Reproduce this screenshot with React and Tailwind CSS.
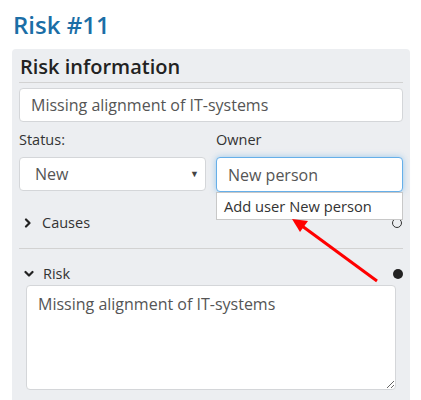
import React from "react";

const F = { fontFamily: '"Open Sans", "Liberation Sans", sans-serif' };

function ChevronRight() {
  return (
    <svg width="8" height="10" viewBox="0 0 8 10" className="shrink-0">
      <path d="M2 1.5 L5.5 5 L2 8.5" fill="none" stroke="#222" strokeWidth="2.2" strokeLinecap="round" strokeLinejoin="round" />
    </svg>
  );
}
function ChevronDown() {
  return (
    <svg width="10" height="8" viewBox="0 0 10 8" className="shrink-0">
      <path d="M1.5 2 L5 5.5 L8.5 2" fill="none" stroke="#222" strokeWidth="2.2" strokeLinecap="round" strokeLinejoin="round" />
    </svg>
  );
}

export default function App() {
  return (
    <div className="relative w-[421px] h-[400px] overflow-hidden bg-white px-[12px]" style={F}>
      <div className="h-[49px] pt-[9px] pl-[1px]">
        <h1 className="text-[24px] leading-[32px] font-semibold text-[#1b6ea6]">Risk #11</h1>
      </div>
      <div className="w-[398px] h-[351px] bg-[#eceef1] rounded-t-[4px] px-[7px]">
        <div className="h-[34px] pt-[4px] border-b border-[#d2d2d2] flex items-end">
          <h2 className="text-[20px] leading-[30px] font-semibold text-[#222] pl-[1px]">Risk information</h2>
        </div>
        <div className="pt-[5px]">
          <div className="h-[34px] bg-white border border-[#d4d6d9] rounded-[4px] flex items-center pl-[11px] text-[16px] text-[#555]">
            Missing alignment of IT-systems
          </div>
        </div>
        <div className="grid grid-cols-[187px_187px] gap-x-[10px]">
          <div>
            <div className="h-[35px] flex items-center text-[14.5px] text-[#333]">Status:</div>
            <div className="h-[34px] bg-white border border-[#d4d6d9] rounded-[4px] flex items-center justify-between pl-[15px] pr-[6px] text-[16px] text-[#555]">
              <span>New</span>
              <span className="text-[9px] text-[#444]">▼</span>
            </div>
          </div>
          <div className="relative">
            <div className="h-[35px] flex items-center text-[14.5px] text-[#333]">Owner</div>
            <div className="h-[35px] bg-white border border-[#66afe9] rounded-[4px] flex items-center pl-[11px] text-[16px] text-[#555] shadow-[0_0_6px_rgba(102,175,233,0.6)]">
              New person
            </div>
            <div className="absolute left-0 right-0 top-[70px] z-10 h-[28px] bg-white border border-[#c8c8c8] flex items-center pl-[7px] text-[14.7px] text-[#333]">
              Add user New person
            </div>
          </div>
        </div>
        <div className="h-[57px] border-b border-[#d2d2d2] flex items-center justify-between pl-[5px] pr-[1px] pt-[6px]">
          <div className="flex items-center gap-[10px]">
            <ChevronRight />
            <span className="text-[14.5px] text-[#333]">Causes</span>
          </div>
          <span className="w-[10px] h-[10px] rounded-full border-[1.5px] border-[#333]" />
        </div>
        <div className="h-[35px] flex items-center justify-between pl-[5px] pt-[15px]">
          <div className="flex items-center gap-[9px]">
            <ChevronDown />
            <span className="text-[14.5px] text-[#333]">Risk</span>
          </div>
          <span className="w-[10px] h-[10px] rounded-full bg-[#222]" />
        </div>
        <div className="px-[7px] pt-[1px]">
          <textarea
            readOnly
            defaultValue="Missing alignment of IT-systems"
            className="block w-full h-[105px] bg-white border border-[#d4d6d9] rounded-[4px] px-[11px] pt-[6px] text-[16px] text-[#555] resize-y outline-none"
            style={F}
          />
        </div>
      </div>
      <svg className="absolute left-0 top-0 pointer-events-none z-20" width="421" height="400">
        <line x1="377" y1="281" x2="298" y2="223" stroke="#f00" strokeWidth="3" />
        <path d="M292 219 L308 221 L300 232 Z" fill="#f00" />
      </svg>
    </div>
  );
}
